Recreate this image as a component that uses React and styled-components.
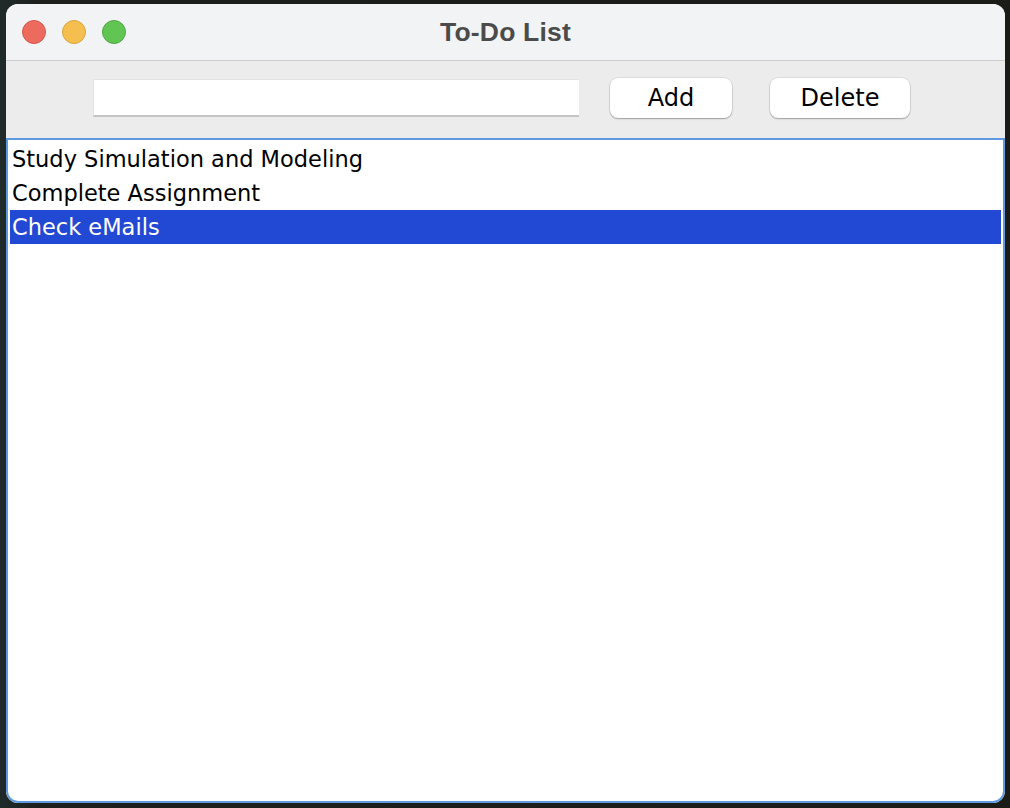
import React, { useState } from 'react';
import styled, { createGlobalStyle } from 'styled-components';

const GlobalStyle = createGlobalStyle`
  html, body {
    margin: 0;
    padding: 0;
    height: 100%;
  }
  body {
    background: linear-gradient(90deg, #1f2b2a 0px, #1c1f1c 40px, #1b1b18 100%);
    font-family: "DejaVu Sans", "Liberation Sans", sans-serif;
  }
  #root {
    padding: 4px 4px 0 6px;
  }
`;

const Window = styled.div`
  width: 999px;
  height: 799px;
  border-radius: 12px;
  overflow: hidden;
  display: flex;
  flex-direction: column;
  background: #ececec;
`;

const TitleBar = styled.div`
  height: 56px;
  flex: none;
  display: flex;
  align-items: center;
  position: relative;
  padding-left: 16px;
  background: #f2f3f5;
  border-bottom: 1px solid #cdcdcd;
`;

const Lights = styled.div`
  display: flex;
  gap: 16px;
`;

const Light = styled.span`
  width: 24px;
  height: 24px;
  border-radius: 50%;
  box-sizing: border-box;
  background: ${p => p.$fill};
  border: 1px solid ${p => p.$edge};
`;

const Title = styled.div`
  position: absolute;
  left: 0;
  right: 0;
  text-align: center;
  font-family: "Liberation Sans", Arial, sans-serif;
  font-weight: bold;
  font-size: 26.5px;
  letter-spacing: 0.2px;
  color: #4b4b4b;
  pointer-events: none;
`;

const Toolbar = styled.div`
  height: 77px;
  flex: none;
  box-sizing: border-box;
  display: flex;
  align-items: flex-start;
  padding: 17px 0 0 87px;
  background: #ececec;
`;

const Field = styled.input`
  width: 486px;
  height: 38px;
  margin-top: 1px;
  margin-right: 31px;
  box-sizing: border-box;
  border: none;
  border-top: 1px solid #e2e2e2;
  border-left: 1px solid #e2e2e2;
  border-bottom: 2px solid #c4c4c4;
  background: #fff;
  font-family: "DejaVu Sans", sans-serif;
  font-size: 20px;
  outline: none;
`;

const Button = styled.button`
  width: ${p => p.$w}px;
  height: 40px;
  margin-right: ${p => p.$gap || 0}px;
  border: none;
  border-radius: 8px;
  background: #fff;
  box-shadow: 0 1px 1.5px rgba(0, 0, 0, 0.3), 0 0 0 0.5px rgba(0, 0, 0, 0.12);
  font-family: "DejaVu Sans", sans-serif;
  font-size: 24px;
  color: #000;
  padding: 0;
  cursor: default;
`;

const List = styled.ul`
  flex: 1;
  margin: 0;
  list-style: none;
  padding: 2px;
  background: #fff;
  border: 2px solid #5e9ae0;
  border-radius: 0 0 12px 12px;
`;

const Item = styled.li`
  height: 34px;
  line-height: 34px;
  padding-left: 2px;
  font-family: "DejaVu Sans", sans-serif;
  font-size: 22.5px;
  white-space: nowrap;
  color: ${p => (p.$selected ? '#fff' : '#000')};
  background: ${p => (p.$selected ? '#2249d3' : 'transparent')};
`;

const tasks = ['Study Simulation and Modeling', 'Complete Assignment', 'Check eMails'];

export default function App() {
  const [selected, setSelected] = useState(2);
  return (
    <>
      <GlobalStyle />
      <Window>
        <TitleBar>
          <Lights>
            <Light $fill="#ed6a5e" $edge="#d5574b" />
            <Light $fill="#f5bf4f" $edge="#d9a440" />
            <Light $fill="#61c554" $edge="#4fa843" />
          </Lights>
          <Title>To-Do List</Title>
        </TitleBar>
        <Toolbar>
          <Field type="text" />
          <Button $w={122} $gap={38}>Add</Button>
          <Button $w={140}>Delete</Button>
        </Toolbar>
        <List>
          {tasks.map((t, i) => (
            <Item key={t} $selected={i === selected} onClick={() => setSelected(i)}>
              {t}
            </Item>
          ))}
        </List>
      </Window>
    </>
  );
}
